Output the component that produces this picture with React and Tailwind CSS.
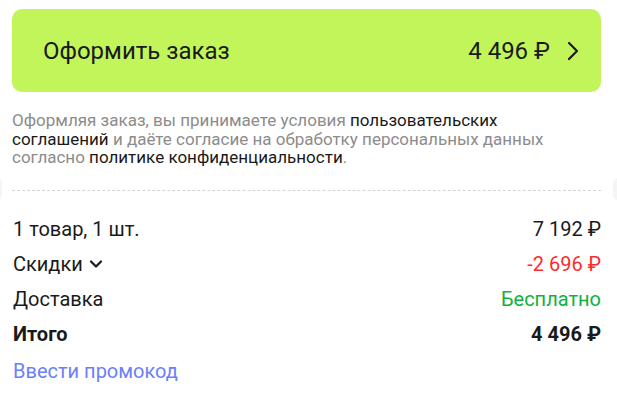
import React from 'react';

const ChevronRight = () => (
  <svg width="14" height="20" viewBox="0 0 14 20" fill="none" className="shrink-0">
    <path d="M3 2l8 8-8 8" stroke="#1a1a1a" strokeWidth="2.2" strokeLinecap="round" strokeLinejoin="round" />
  </svg>
);

const ChevronDown = () => (
  <svg width="14" height="10" viewBox="0 0 14 10" fill="none" className="shrink-0">
    <path d="M2 2.5l5 5 5-5" stroke="#1a1a1a" strokeWidth="2.2" strokeLinecap="round" strokeLinejoin="round" />
  </svg>
);

const rows = [
  { label: '1 товар, 1 шт.', value: '7 192 ₽', tone: 'text-[#1a1a1a]' },
  { label: 'Скидки', value: '-2 696 ₽', tone: 'text-[#ff2b2b]', toggle: true },
  { label: 'Доставка', value: 'Бесплатно', tone: 'text-[#10b23c]' },
];

export default function App() {
  return (
    <div
      className="relative w-[617px] h-[402px] overflow-hidden bg-white pl-[12px] pr-[16px] pt-[9px]"
      style={{ fontFamily: 'Roboto, "Noto Sans", sans-serif' }}
    >
      {/* checkout button */}
      <button className="flex h-[83px] w-full items-center rounded-[10px] bg-[#c2f55a] pl-[31px] pr-[21px] text-[#1a1a1a]">
        <span className="text-[24px] leading-none">Оформить заказ</span>
        <span className="ml-auto text-[24px] leading-none">4 496 ₽</span>
        <span className="ml-[16px] flex"><ChevronRight /></span>
      </button>

      <p className="mt-[19px] max-w-[560px] text-[17px] leading-[18.5px] text-[#8c8c8c]">
        Оформляя заказ, вы принимаете условия <span className="text-[#1a1a1a]">пользовательских соглашений</span> и даёте согласие на обработку персональных данных согласно <span className="text-[#1a1a1a]">политике конфиденциальности</span>.
      </p>

      {/* ticket divider */}
      <div className="relative mt-[23px] border-t border-dashed border-[#d4d4d4]" />
      <div className="absolute left-[-12px] top-[177px] h-[24px] w-[14px] rounded-full bg-[#f4f5f7]" />
      <div className="absolute right-[-10px] top-[177px] h-[24px] w-[14px] rounded-full bg-[#f4f5f7]" />

      <div className="mt-[21px] flex flex-col text-[20px] leading-[24px] text-[#1a1a1a]">
        {rows.map((r) => (
          <div key={r.label} className="flex h-[35px] items-center justify-between pl-[1px]">
            <span className="flex items-center gap-[6px]">
              {r.label}
              {r.toggle && <ChevronDown />}
            </span>
            <span className={r.tone}>{r.value}</span>
          </div>
        ))}
        <div className="flex h-[35px] items-center justify-between pl-[1px] font-bold">
          <span>Итого</span>
          <span>4 496 ₽</span>
        </div>
        <span className="mt-[2px] flex h-[35px] items-center pl-[1px] text-[#6c80fa]">Ввести промокод</span>
      </div>
    </div>
  );
}
